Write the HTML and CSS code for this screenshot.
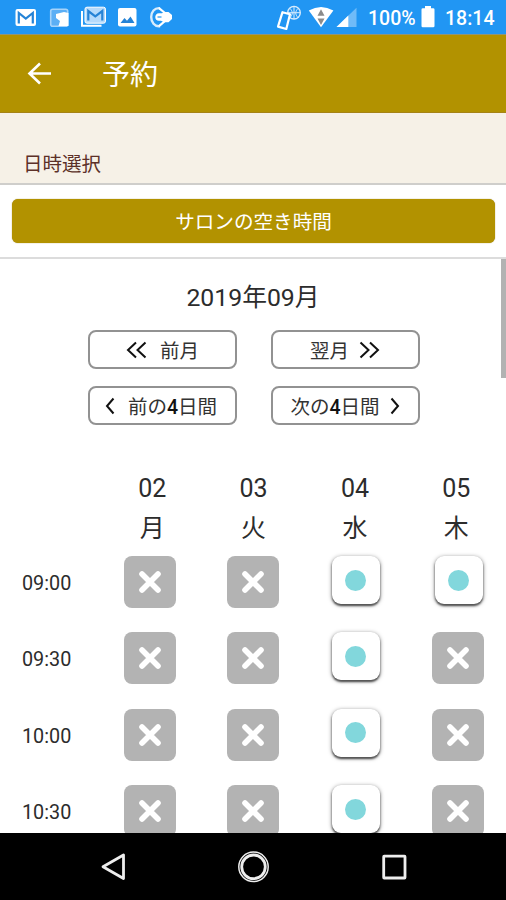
FILE: index.html
```html
<!DOCTYPE html>
<html lang="ja">
<head>
<meta charset="utf-8">
<title>予約</title>
<link rel="stylesheet" href="styles.css">
</head>
<body>
<svg width="0" height="0" class="defs">
  <symbol id="cross" viewBox="0 0 52 52"><path d="M18 18L34 34M34 18L18 34" stroke="#fff" stroke-width="5.6" stroke-linecap="round"/></symbol>
</svg>
<div class="status">
  <svg width="180" height="34" viewBox="0 0 180 34" fill="none">
    <rect x="15.5" y="9" width="20.5" height="17" rx="2" fill="#fff"/>
    <path d="M18.8 23.5V13L25.8 18.6L32.8 13V23.5" stroke="#2583d6" stroke-width="2.2"/>
    <rect x="50.7" y="9.2" width="17" height="17" rx="2" fill="#5caff5" stroke="#a6d3fa" stroke-width="1.6"/>
    <path d="M56 14L64 12L68.5 13V26H58.500L60 21L56 18Z" fill="#fff"/>
    <path d="M82 11V25.8H101.5" stroke="#fff" stroke-width="2"/>
    <rect x="85" y="7.2" width="20.5" height="16" rx="2" fill="#b5dafb" stroke="#fff" stroke-width="1"/>
    <path d="M88.3 20.5V11L95.3 16.3L102.3 11V20.5" stroke="#2583d6" stroke-width="2.2"/>
    <rect x="118" y="8" width="18.5" height="18.5" rx="2" fill="#fff"/>
    <path d="M120.5 23L124.5 18L127 20.8L130.5 16.5L134.5 23Z" fill="#2583d6"/>
    <path d="M160 8.2C154.5 7.500 151.2 12 151.2 17S154.5 27 160 26.2" stroke="#d8ecfd" stroke-width="2.4"/>
    <path d="M159 8.2L165 13M159 26.2L165 21" stroke="#fff" stroke-width="2.2"/>
    <path d="M159 13.200H162L164 12H168.5L172 15V19L168.5 22.2H164L161 20.8H159C154 20.800 154 13.200 159 13.200Z" fill="#fff"/>
    <path d="M157.500 17H161.500" stroke="#2196f3" stroke-width="1.2"/>
  </svg>
  <div class="status-right">
    <svg width="90" height="34" viewBox="0 0 90 34" fill="none">
      <circle cx="18" cy="12.7" r="6.3" stroke="#d8ecfd" stroke-width="1.4"/>
      <path d="M12 12.7H24M18 6.500V19M14 8.500C17 11.500 17 14.500 14 17.500M22 8.500C19 11.500 19 14.500 22 17.500" stroke="#d8ecfd" stroke-width="1"/>
      <path d="M6.500 12.200L14 14.200L10.300 29L2 26.600Z" stroke="#fff" stroke-width="2.2" stroke-linejoin="round" fill="#2196f3"/>
      <path d="M32.8 10.600Q45 3.500 57.4 10.600L45 27.2Z" fill="#fff"/>
      <path d="M45 9.2L48.500 15.7H41.500ZM45 25L41.500 18.6H48.500Z" fill="#8b8b8b"/>
      <path d="M80.5 7.8V27H60.5Z" fill="#70bbf8"/>
      <path d="M72.3 15.6V27H60.5Z" fill="#fff"/>
    </svg>
    <span class="percent">100%</span>
    <svg width="14" height="22" viewBox="0 0 14 22"><path d="M4 0H10V2.2H12.2Q13.5 2.2 13.5 3.5V20Q13.5 21.3 12.2 21.3H1.8Q.5 21.3 .5 20V3.5Q.5 2.2 1.8 2.2H4Z" fill="#fff"/></svg>
    <span class="clock">18:14</span>
  </div>
</div>
<header class="bar">
  <svg width="26" height="24" viewBox="0 0 26 24" fill="none" stroke="#fff" stroke-width="2.6"><path d="M25 11.500H3.500M14 1.5L3.500 11.500L14 21.500"/></svg>
  <h1>予約</h1>
</header>
<div class="section">日時選択</div>
<div class="action"><button class="primary">サロンの空き時間</button></div>
<main class="content">
  <div class="month">2019年09月</div>
  <div class="pager">
    <button class="month-step"><svg width="21" height="18" viewBox="0 0 21 18"><path d="M10 1.5L2 9L10 16.5M19.5 1.5L11.500 9L19.5 16.5"/></svg><span>前月</span></button>
    <button class="month-step next"><span>翌月</span><svg width="21" height="18" viewBox="0 0 21 18"><path d="M1.500 1.5L9.500 9L1.500 16.5M11 1.5L19 9L11 16.5"/></svg></button>
    <button class="back"><svg width="10" height="18" viewBox="0 0 10 18"><path d="M8.500 1.5L2 9L8.500 16.5"/></svg><span>前の<b>4</b>日間</span></button>
    <button class="next"><span>次の<b>4</b>日間</span><svg width="10" height="18" viewBox="0 0 10 18"><path d="M1.500 1.5L8 9L1.500 16.5"/></svg></button>
  </div>
  <div class="days">
    <div>02<span>月</span></div><div>03<span>火</span></div><div>04<span>水</span></div><div>05<span>木</span></div>
  </div>
  <div class="slots">
    <div class="row"><time>09:00</time><svg class="full"><use href="#cross"/></svg><svg class="full"><use href="#cross"/></svg><i class="open"></i><i class="open"></i></div>
    <div class="row"><time>09:30</time><svg class="full"><use href="#cross"/></svg><svg class="full"><use href="#cross"/></svg><i class="open"></i><svg class="full"><use href="#cross"/></svg></div>
    <div class="row"><time>10:00</time><svg class="full"><use href="#cross"/></svg><svg class="full"><use href="#cross"/></svg><i class="open"></i><svg class="full"><use href="#cross"/></svg></div>
    <div class="row"><time>10:30</time><svg class="full"><use href="#cross"/></svg><svg class="full"><use href="#cross"/></svg><i class="open"></i><svg class="full"><use href="#cross"/></svg></div>
  </div>
  <div class="scrollbar"></div>
</main>
<nav class="nav">
  <svg width="506" height="67" viewBox="0 0 506 67" fill="none" stroke="#eee">
    <path d="M103 33.800L123.500 22V45.500Z" stroke-width="2.800" stroke-linejoin="round"/>
    <circle cx="253.500" cy="33.800" r="14.700" stroke-width="1.500"/>
    <circle cx="253.500" cy="33.800" r="11.800" stroke-width="2.800"/>
    <rect x="383.700" y="23.200" width="21.300" height="21.800" stroke-width="2.800" rx=".5"/>
  </svg>
</nav>
</body>
</html>
```
FILE: styles.css
```css
* { box-sizing: border-box; }
body {
  margin: 0;
  width: 506px;
  height: 900px;
  overflow: hidden;
  display: flex;
  flex-direction: column;
  background: #fff;
  color: #2c2c2c;
  font-family: Roboto, "Noto Sans CJK JP", sans-serif;
  font-weight: 400;
}
svg { display: block; flex: none; }
.defs { position: absolute; }
.status {
  height: 34px;
  flex: none;
  display: flex;
  justify-content: space-between;
  background: #2196f3;
  color: #fff;
}
.status-right {
  display: flex;
  align-items: center;
  width: 230px;
  font-size: 19.500px;
  font-weight: 500;
  line-height: 34px;
}
.percent { width: 53px; margin-left: 2px; padding-top: 3px; }
.clock { margin-left: 10px; padding-top: 3px; }
.bar {
  height: 79px;
  flex: none;
  display: flex;
  align-items: center;
  gap: 50px;
  padding-left: 26px;
  border-top: 1px solid #8f9577;
  border-bottom: 1px solid #a58316;
  background: #b29200;
  color: #fff;
}
.bar h1 { margin: 0; padding-top: 5px; font-size: 28px; font-weight: 400; line-height: 40px; }
.section {
  height: 72px;
  flex: none;
  padding: 37px 0 0 23px;
  border-bottom: 2px solid #cfcecb;
  background: #f6f1e7;
  color: #5c3028;
  font-size: 19.500px;
  line-height: 30px;
}
.action {
  height: 74px;
  flex: none;
  padding: 14px 11px 14px 12px;
  border-bottom: 2px solid #dcdcdc;
}
button {
  font: inherit;
  border: 2px solid #929292;
  border-radius: 8px;
  background: #fff;
  color: #333;
}
.primary {
  display: block;
  width: 100%;
  height: 44px;
  padding: 0 0 2px;
  border: 0;
  border-radius: 6px;
  background: #b29200;
  box-shadow: 0 0 1px #8b7000;
  color: #fff;
  font-size: 19.600px;
  font-weight: 400;
}
.content { position: relative; flex: 1; min-height: 0; overflow: hidden; }
.month { padding-top: 21px; font-size: 24.800px; line-height: 36px; text-align: center; }
.pager {
  display: grid;
  grid-template-columns: 149px 149px;
  grid-auto-rows: 39px;
  gap: 17px 34px;
  margin: 14px 0 0 88px;
}
.pager button {
  display: flex;
  align-items: center;
  justify-content: center;
  gap: 13px;
  padding: 0;
  font-size: 19.500px;
}
.pager svg { fill: none; stroke: #111; stroke-width: 2; }
.pager b { color: #111; font-weight: 500; }
.pager .back { padding-right: 3px; }
.pager .next { gap: 10px; padding-right: 1px; }
.days {
  display: grid;
  grid-template-columns: repeat(4, 101.400px);
  margin: 44px 0 0 101.500px;
  font-size: 25px;
  line-height: 40px;
  text-align: center;
}
.days span { display: block; }
.slots { margin-top: 7px; }
.row {
  display: grid;
  grid-template-columns: 98.500px repeat(4, 102.800px);
  height: 76.400px;
  justify-items: center;
}
.row time { justify-self: start; padding-left: 22px; font-size: 19.800px; line-height: 55px; }
.full { width: 52px; height: 52px; border-radius: 8px; background: #b3b3b3; }
.open {
  display: flex;
  align-items: center;
  justify-content: center;
  width: 48px;
  height: 48px;
  margin-left: 1px;
  border-radius: 9px;
  background: #fff;
  box-shadow: 0 2px 2px #555, 0 1px 4px rgba(0, 0, 0, .5);
}
.open::before { content: ""; width: 21px; height: 21px; border-radius: 50%; background: #82d7dc; }
.scrollbar { position: absolute; top: 0; right: 0; width: 5px; height: 119px; background: #b2b2b2; }
.nav { height: 67px; flex: none; background: #000; }
```
